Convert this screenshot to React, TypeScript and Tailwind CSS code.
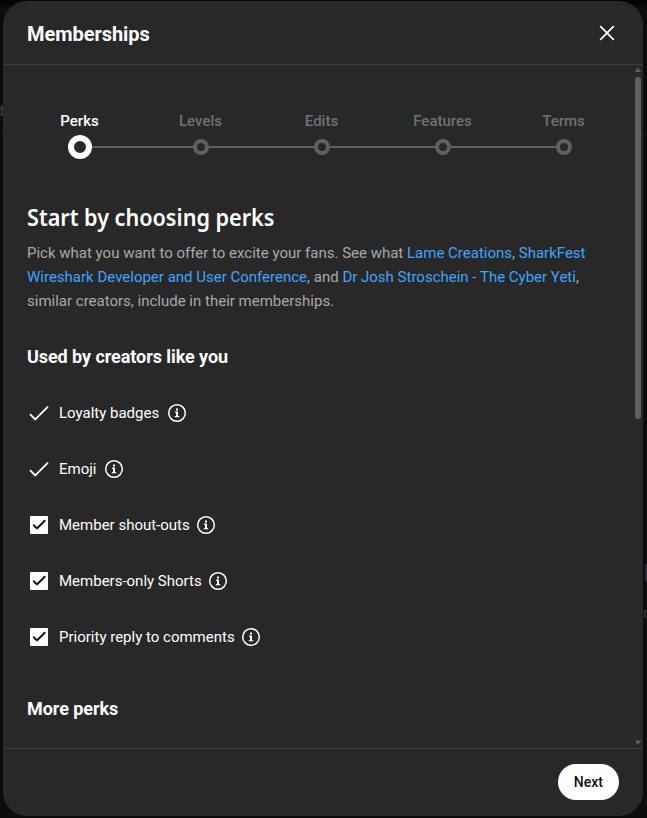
interface Perk {
    label: string;
    included?: boolean;
}

const steps = ['Perks', 'Levels', 'Edits', 'Features', 'Terms'];

const perks: Perk[] = [
    { label: 'Loyalty badges', included: true },
    { label: 'Emoji', included: true },
    { label: 'Member shout-outs' },
    { label: 'Members-only Shorts' },
    { label: 'Priority reply to comments' },
];

const InfoIcon = () => (
    <svg viewBox="0 0 24 24" className="w-6 h-6 shrink-0" fill="none">
        <circle cx="12" cy="12" r="8.3" stroke="#fff" strokeWidth="1.5" />
        <path d="M11 7.5h2v2h-2zM10 10.5h3v4.5h1.2v1.2H9.8V15H11v-3.3h-1z" fill="#fff" />
    </svg>
);

const PerkMark = ({ included }: { included?: boolean }) => {
    if (included) {
        return (
            <svg viewBox="0 0 24 24" className="w-6 h-6 shrink-0" fill="none">
                <path d="M3 13.2L8.2 18.4L21 5.6" stroke="#fff" strokeWidth="1.8" />
            </svg>
        );
    }

    return (
        <svg viewBox="0 0 24 24" className="w-6 h-6 shrink-0" fill="none">
            <rect x="3" y="3" width="18" height="18" rx="1" fill="#fff" />
            <path d="M6.2 11.6L10 15.4L18.2 7.2" stroke="#0f0f0f" strokeWidth="2" />
        </svg>
    );
};

const Stepper = () => (
    <div className="flex ml-[16.5px] mt-[46px]">
        {steps.map((step, i) => (
            <div key={step} className="w-[121px] flex flex-col items-center">
                <span className={`-ml-px text-[15px] leading-5 font-medium ${i === 0 ? 'text-white' : 'text-[#717171]'}`}>
                    {step}
                </span>
                <div className="w-full h-6 mt-1 flex items-center">
                    <div className={`flex-1 h-[2px] ${i === 0 ? '' : 'bg-[#606060]'}`} />
                    <div
                        className={`rounded-full shrink-0 ${i === 0 ? 'w-6 h-6 border-6 border-white' : 'w-4 h-4 border-4 border-[#606060]'}`}
                    />
                    <div className={`flex-1 h-[2px] ${i === steps.length - 1 ? '' : 'bg-[#606060]'}`} />
                </div>
            </div>
        ))}
    </div>
);

const Scrollbar = () => (
    <div className="w-2 mr-px shrink-0 flex flex-col items-center">
        <svg viewBox="0 0 8 12" className="w-2 h-3 shrink-0">
            <path d="M4 2.4L7.2 7H0.8z" fill="#606060" />
        </svg>
        <div className="w-1.5 h-[342px] rounded-full bg-[#606060]" />
        <div className="flex-1" />
        <svg viewBox="0 0 8 12" className="w-2 h-3 shrink-0">
            <path d="M0.8 4.4h6.4L4 9z" fill="#606060" />
        </svg>
    </div>
);

export default function App() {
    return (
        <div className="relative w-[647px] h-[818px] overflow-hidden bg-[#0c0c0c] pl-[3px] pt-px font-['Roboto',sans-serif]">
            {/* Page showing round the dialog */}
            <div className="absolute top-0 left-0 w-full h-[5px] bg-[#050505]" />
            <div className="absolute left-[-5px] top-[101px] text-[15px] leading-5 text-[#444]">d</div>
            <div className="absolute left-0 top-[135px] w-full h-px bg-[#191919]" />
            <div className="absolute left-[645px] top-[564px] w-1 h-[17px] bg-[#29294b]" />
            <div className="absolute left-[643px] top-[603px] text-[15px] leading-5 text-[#3c3c3c]">r</div>

            <div className="relative w-[640px] h-[815px] rounded-3xl bg-[#282828] flex flex-col overflow-hidden">
                <header className="h-16 shrink-0 border-b border-[#3e3e3e] pl-6 pr-6 flex items-center justify-between">
                    <h1 className="mt-0.5 text-[20px] leading-7 font-bold tracking-[-0.05px] text-white">Memberships</h1>
                    <svg viewBox="0 0 24 24" className="w-6 h-6" fill="none">
                        <path d="M5.2 5.2L18.8 18.8M18.8 5.2L5.2 18.8" stroke="#fff" strokeWidth="1.8" />
                    </svg>
                </header>

                <div className="flex-1 min-h-0 flex">
                    <main className="flex-1 min-w-0 overflow-hidden">
                        <Stepper />

                        <section className="ml-6 mt-[42px]">
                            <h2 className="origin-left scale-x-[0.9] text-[24px] leading-8 font-semibold text-white font-['Noto_Sans',sans-serif] whitespace-nowrap">
                                Start by choosing perks
                            </h2>
                            <p className="mt-2 text-[15px] leading-6 text-[#aaa] whitespace-nowrap">
                                Pick what you want to offer to excite your fans. See what{' '}
                                <a className="text-[#3ea6ff]">Lame Creations</a>, <a className="text-[#3ea6ff]">SharkFest</a>
                                <br />
                                <a className="text-[#3ea6ff]">Wireshark Developer and User Conference</a>, and{' '}
                                <a className="text-[#3ea6ff]">Dr Josh Stroschein - The Cyber Yeti</a>,
                                <br />
                                similar creators, include in their memberships.
                            </p>

                            <h3 className="mt-8 text-[18px] leading-6 font-bold tracking-[-0.07px] text-white">Used by creators like you</h3>
                            <ul className="mt-4">
                                {perks.map(perk => (
                                    <li key={perk.label} className="h-14 flex items-center">
                                        <PerkMark included={perk.included} />
                                        <span className={`ml-2 text-[15px] leading-6 text-white ${perk.included ? 'mr-1.5' : 'mr-1'}`}>
                                            {perk.label}
                                        </span>
                                        <InfoIcon />
                                    </li>
                                ))}
                            </ul>

                            <h3 className="mt-8 text-[18px] leading-6 font-bold tracking-[-0.07px] text-white">More perks</h3>
                        </section>
                    </main>
                    <Scrollbar />
                </div>

                <footer className="h-[68px] shrink-0 border-t border-[#3e3e3e] pr-6 pb-0.5 flex items-center justify-end">
                    <button className="h-9 px-4 rounded-full bg-white text-[14px] leading-9 font-medium text-[#0f0f0f]">Next</button>
                </footer>
            </div>
        </div>
    );
}
